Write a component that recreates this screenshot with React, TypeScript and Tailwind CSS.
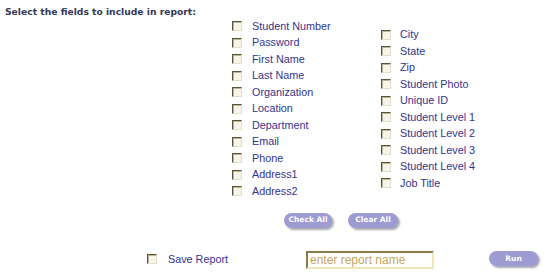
import React from 'react';

const leftFields = [
  'Student Number',
  'Password',
  'First Name',
  'Last Name',
  'Organization',
  'Location',
  'Department',
  'Email',
  'Phone',
  'Address1',
  'Address2',
];

const rightFields = [
  'City',
  'State',
  'Zip',
  'Student Photo',
  'Unique ID',
  'Student Level 1',
  'Student Level 2',
  'Student Level 3',
  'Student Level 4',
  'Job Title',
];

// old-style sunken checkbox
const Box: React.FC = () => (
  <span className="block w-[10px] h-[10px] shrink-0 border border-t-[#5a553a] border-l-[#5a553a] border-b-[#e2dec8] border-r-[#e2dec8] bg-[#f7f5ea] shadow-[inset_1px_1px_0_#bcb59a]" />
);

const Field: React.FC<{ label: string; gap: string }> = ({ label, gap }) => (
  <label className="flex items-center h-[16.5px]">
    <Box />
    <span className={`${gap} text-[10.8px] leading-none text-[#33338f] font-['Liberation_Sans',Arial,sans-serif]`}>
      {label}
    </span>
  </label>
);

const PillButton: React.FC<{ label: string; width: string }> = ({ label, width }) => (
  <button
    className={`${width} h-[15px] rounded-full bg-[#9d9bd2] text-white text-[7.5px] font-bold leading-none font-['DejaVu_Sans',Verdana,sans-serif] shadow-[2px_2px_2px_#a9a9b4]`}
  >
    {label}
  </button>
);

export default function App() {
  return (
    <div className="w-[558px] h-[274px] bg-white overflow-hidden">
      <div className="pt-[6px] pl-[5px] text-[9.2px] leading-[12px] font-bold text-[#37375a] font-['DejaVu_Sans',Verdana,sans-serif]">
        Select the fields to include in report:
      </div>

      {/* field columns */}
      <div className="flex items-center ml-[232px]">
        <div className="w-[149px] flex flex-col">
          {leftFields.map((f) => (
            <Field key={f} label={f} gap="ml-[10px]" />
          ))}
        </div>
        <div className="flex flex-col">
          {rightFields.map((f) => (
            <Field key={f} label={f} gap="ml-[9px]" />
          ))}
        </div>
      </div>

      {/* check / clear */}
      <div className="flex ml-[284px] mt-[13px] gap-[16px]">
        <PillButton label="Check All" width="w-[48px]" />
        <PillButton label="Clear All" width="w-[50px]" />
      </div>

      {/* save row */}
      <div className="flex items-center mt-[23px]">
        <div className="ml-[147px] w-[159px] flex items-center">
          <Box />
          <span className="ml-[11px] text-[10.8px] leading-none text-[#33338f] font-['Liberation_Sans',Arial,sans-serif]">
            Save Report
          </span>
        </div>
        <input
          placeholder="enter report name"
          className="w-[128px] h-[18px] px-[2px] border-2 border-t-[#8c7c4c] border-l-[#8c7c4c] border-b-[#efe6bc] border-r-[#efe6bc] bg-white text-[12px] font-['Liberation_Sans',Arial,sans-serif] placeholder:text-[#c9a65c] outline-none"
        />
        <div className="ml-[55px] -mt-[10px]">
          <PillButton label="Run" width="w-[49px]" />
        </div>
      </div>
    </div>
  );
}
